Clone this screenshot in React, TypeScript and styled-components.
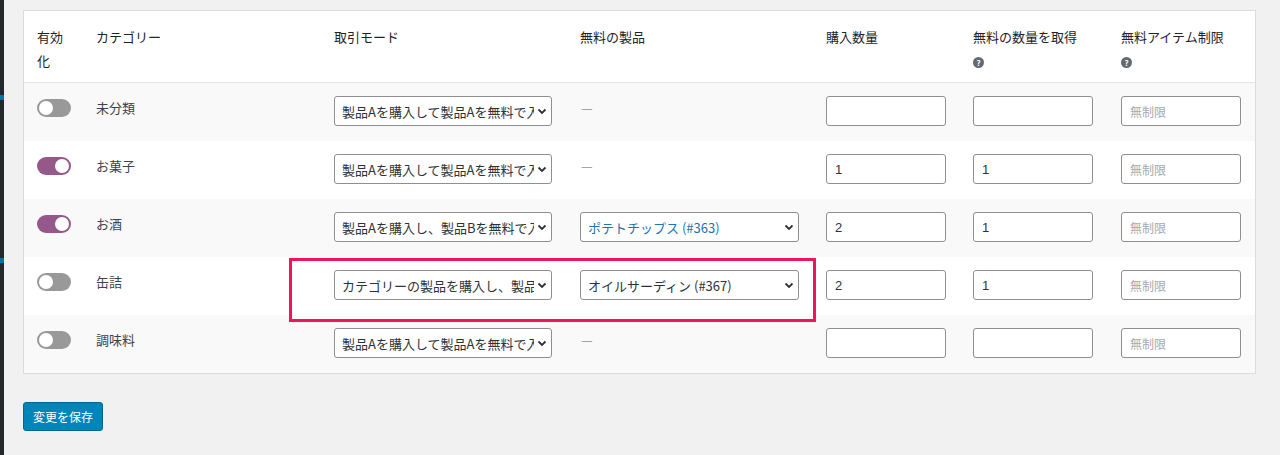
import * as React from "react";
import styled, { createGlobalStyle } from "styled-components";

const Global = createGlobalStyle`
  body {
    margin: 0;
    background: #f1f1f1;
    font-family: "Noto Sans CJK JP", "Liberation Sans", sans-serif;
    font-size: 13px;
    color: #3c434a;
  }
`;

const cols = "59px 238px 246px 246px 147px 148px 1fr";

interface Row {
  name: string;
  on: boolean;
  mode: string;
  product?: string;
  productLink?: boolean;
  buy: string;
  get: string;
  highlight?: boolean;
}

const rows: Row[] = [
  { name: "未分類", on: false, mode: "製品Aを購入して製品Aを無料で入手", buy: "", get: "" },
  { name: "お菓子", on: true, mode: "製品Aを購入して製品Aを無料で入手", buy: "1", get: "1" },
  { name: "お酒", on: true, mode: "製品Aを購入し、製品Bを無料で入手", product: "ポテトチップス (#363)", productLink: true, buy: "2", get: "1" },
  { name: "缶詰", on: false, mode: "カテゴリーの製品を購入し、製品Bを無料で入手", product: "オイルサーディン (#367)", buy: "2", get: "1", highlight: true },
  { name: "調味料", on: false, mode: "製品Aを購入して製品Aを無料で入手", buy: "", get: "" },
];

export default function App() {
  return (
    <Page>
      <Global />
      <Edge />
      <Content>
        <Table>
          <Head>
            <HeadCell>有効<br />化</HeadCell>
            <HeadCell>カテゴリー</HeadCell>
            <HeadCell>取引モード</HeadCell>
            <HeadCell>無料の製品</HeadCell>
            <HeadCell>購入数量</HeadCell>
            <HeadCell>無料の数量を取得<Help>?</Help></HeadCell>
            <HeadCell>無料アイテム制限<Help>?</Help></HeadCell>
          </Head>
          {rows.map((r, i) => (
            <BodyRow key={r.name} $alt={i % 2 === 0}>
              <Toggle $on={r.on} />
              <span>{r.name}</span>
              <Select $w={218}>
                <SelectText>{r.mode}</SelectText>
                <Chevron />
              </Select>
              {r.product ? (
                <Select $w={219}>
                  <SelectText $link={r.productLink}>{r.product}</SelectText>
                  <Chevron />
                </Select>
              ) : (
                <Dash>—</Dash>
              )}
              <Input>{r.buy}</Input>
              <Input>{r.get}</Input>
              <Input $placeholder>無制限</Input>
              {r.highlight && <Highlight />}
            </BodyRow>
          ))}
        </Table>
        <SaveButton>変更を保存</SaveButton>
      </Content>
    </Page>
  );
}

function Chevron() {
  return (
    <svg width="12" height="12" viewBox="0 0 12 12">
      <path d="M2.5 4.5 6 8l3.5-3.5" fill="none" stroke="#2c3338" strokeWidth="1.8" />
    </svg>
  );
}

const Page = styled.div`
  display: flex;
  height: 455px;
  overflow: hidden;
`;

const Edge = styled.div`
  width: 4px;
  flex: none;
  background: linear-gradient(#23282d 0 95px, #0073aa 95px 100px, #23282d 100px 258px, #0073aa 258px 263px, #23282d 263px);
`;

const Content = styled.div`
  flex: 1;
  padding: 10px 24px 0 19px;
`;

const Table = styled.div`
  background: #fff;
  border: 1px solid #dcdcde;
`;

const Head = styled.div`
  display: grid;
  grid-template-columns: ${cols};
  padding: 14px 0 0 13px;
  height: 57px;
  border-bottom: 1px solid #e2e4e7;
`;

const HeadCell = styled.div`
  font-size: 13px;
  line-height: 24px;
  color: #1d2327;
  display: flex;
  flex-direction: column;
  align-items: flex-start;
`;

const Help = styled.span`
  width: 11px;
  height: 11px;
  margin-top: 8px;
  border-radius: 50%;
  background: #646970;
  color: #fff;
  font-size: 8px;
  font-weight: bold;
  line-height: 11px;
  text-align: center;
`;

const BodyRow = styled.div<{ $alt: boolean }>`
  position: relative;
  display: grid;
  grid-template-columns: ${cols};
  align-items: center;
  height: 58px;
  padding-left: 13px;
  background: ${(p) => (p.$alt ? "#f9f9f9" : "#fff")};
  font-size: 13px;
  color: #3c434a;
  & > span { margin-top: -10px; }
`;

const Toggle = styled.div<{ $on: boolean }>`
  position: relative;
  width: 34px;
  height: 18px;
  margin-top: -8px;
  border-radius: 9px;
  background: ${(p) => (p.$on ? "#96588a" : "#999")};
  &::after {
    content: "";
    position: absolute;
    top: 2px;
    left: ${(p) => (p.$on ? "18px" : "2px")};
    width: 14px;
    height: 14px;
    border-radius: 50%;
    background: #fff;
  }
`;

const Select = styled.div<{ $w: number }>`
  width: ${(p) => p.$w}px;
  height: 30px;
  box-sizing: border-box;
  border: 1px solid #8c8f94;
  border-radius: 3px;
  background: #fff;
  display: flex;
  align-items: center;
  padding: 0 3px 0 7px;
  gap: 2px;
  margin-top: -2px;
`;

const SelectText = styled.span<{ $link?: boolean }>`
  flex: 1;
  white-space: nowrap;
  overflow: hidden;
  color: ${(p) => (p.$link ? "#2271b1" : "#2c3338")};
`;

const Dash = styled.span`
  color: #8c8f94;
  padding-left: 1px;
`;

const Input = styled.div<{ $placeholder?: boolean }>`
  width: 120px;
  height: 30px;
  box-sizing: border-box;
  border: 1px solid #8c8f94;
  border-radius: 3px;
  background: #fff;
  display: flex;
  align-items: center;
  padding: 0 8px;
  margin-top: -2px;
  font-family: ${(p) => (p.$placeholder ? "inherit" : '"Liberation Sans", sans-serif')};
  color: ${(p) => (p.$placeholder ? "#a7aaad" : "#2c3338")};
  font-size: ${(p) => (p.$placeholder ? "12px" : "13px")};
`;

const Highlight = styled.div`
  position: absolute;
  z-index: 2;
  left: 265px;
  top: 1px;
  width: 527px;
  height: 64px;
  box-sizing: border-box;
  border: 3px solid #f0145a;
  pointer-events: none;
`;

const SaveButton = styled.button`
  margin-top: 28px;
  height: 29px;
  padding: 0 9px;
  border: 1px solid #006799;
  border-radius: 3px;
  background: #0085ba;
  color: #fff;
  font-family: inherit;
  font-size: 12px;
`;
